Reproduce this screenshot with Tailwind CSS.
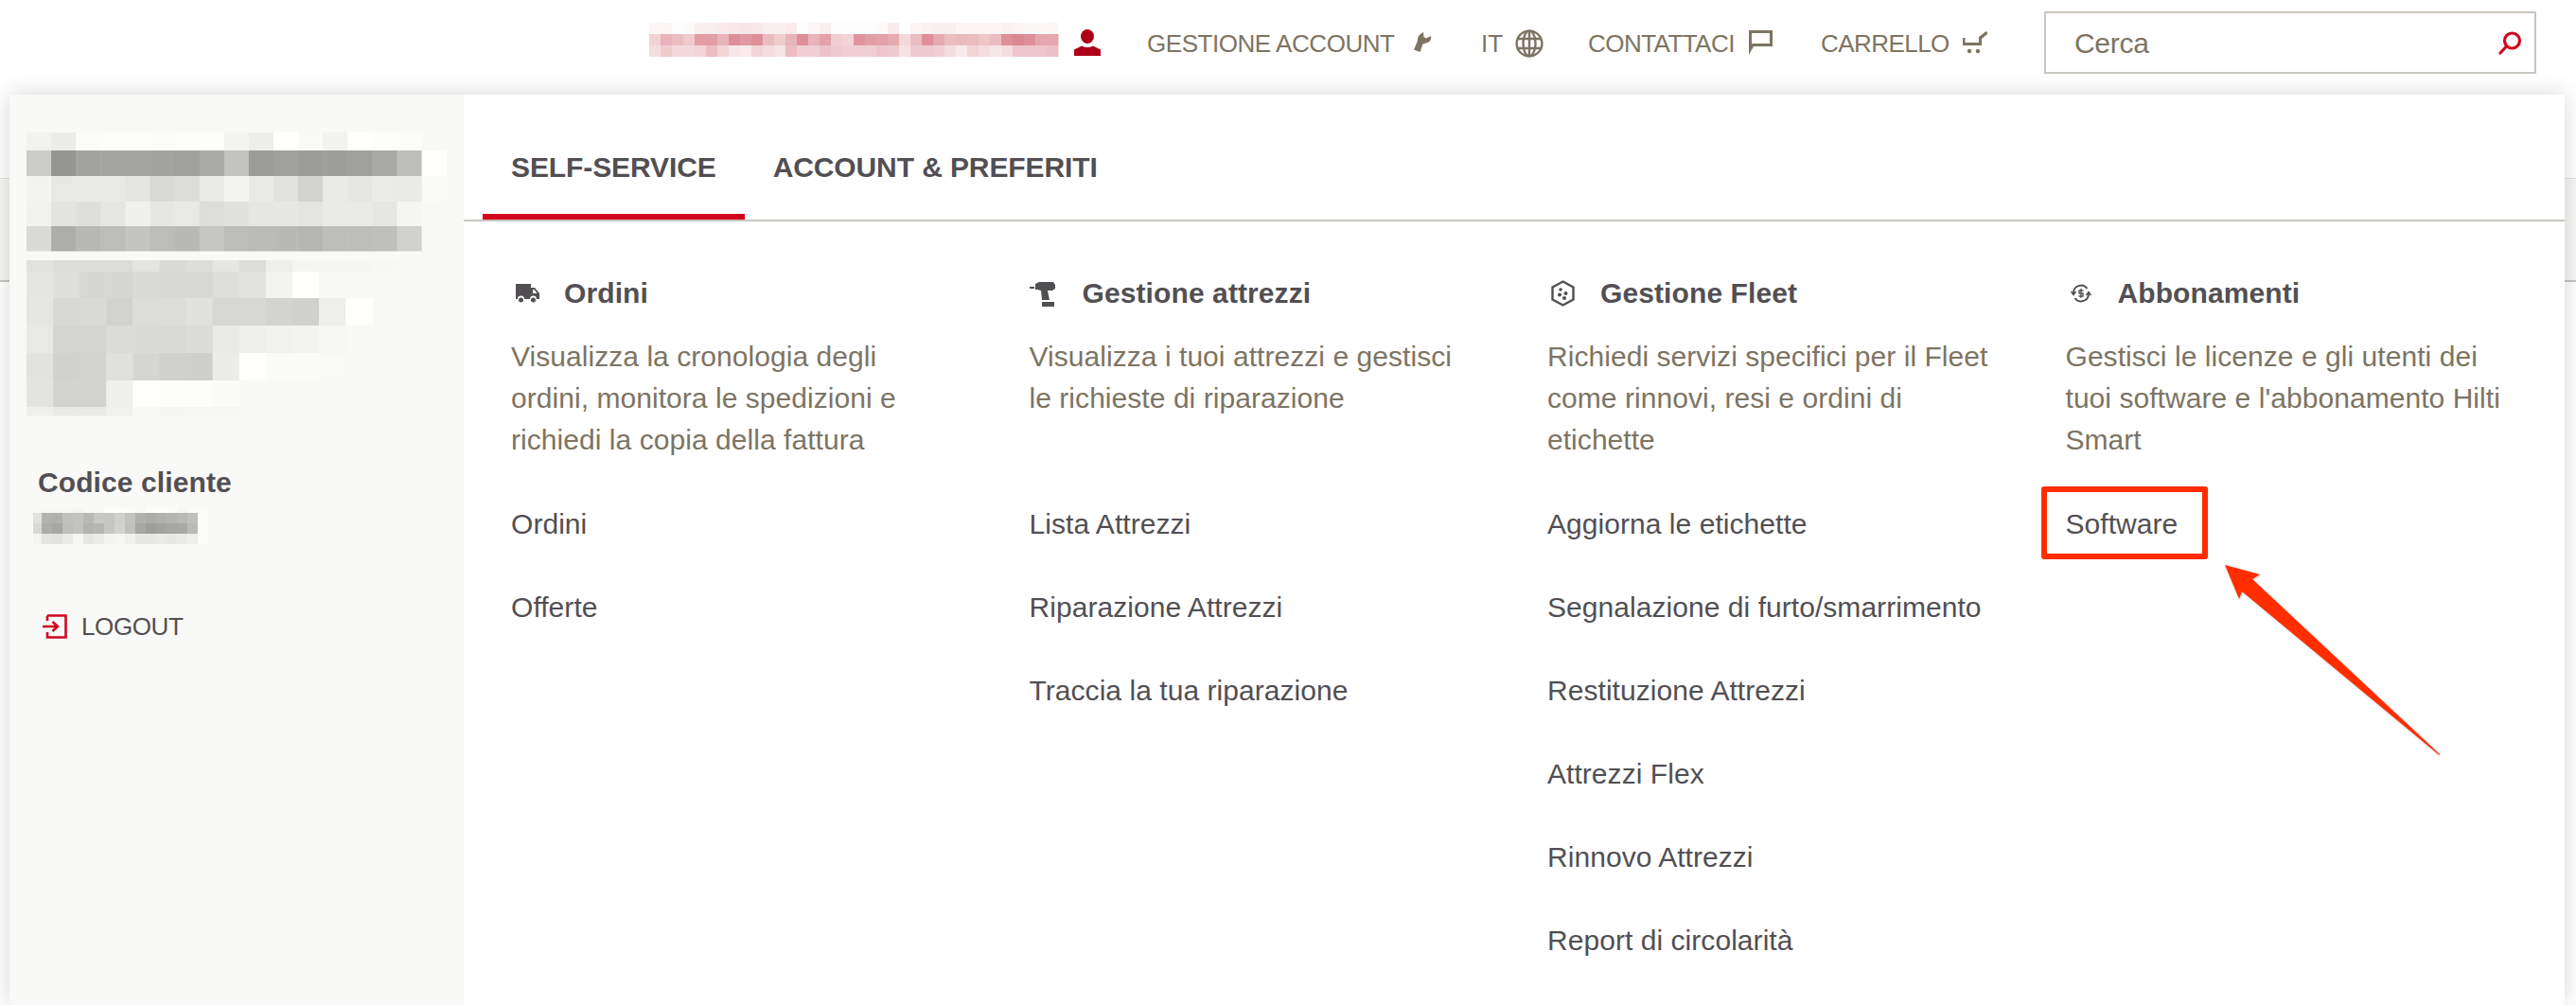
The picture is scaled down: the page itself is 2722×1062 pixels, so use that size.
<!DOCTYPE html>
<html lang="it">
<head>
    <meta charset="UTF-8">
    <title>Hilti - Self-service</title>
    <script src="https://cdn.jsdelivr.net/npm/@tailwindcss/browser@4"></script>
</head>
<body class="relative w-[2722px] h-[1062px] overflow-hidden bg-white font-['Liberation_Sans',Arial,sans-serif] text-[#524f53]">
    <!-- page behind the open menu -->
    <div class="absolute inset-x-0 top-[188px] h-[110px] bg-[#f6f6f5] border-t border-b-2 border-t-[#e2e1df] border-b-[#c9c5bf]"></div>

    <header class="relative h-[100px] flex items-start text-[#7d7463] text-[26px]">
        <svg id="user-blur" class="absolute left-[686px] top-[24px]" width="434" height="36"></svg>
        <svg class="absolute left-[1135px] top-[31px]" width="28" height="28" viewBox="0 0 28 28" fill="#ad0018"><ellipse cx="14" cy="7.5" rx="7" ry="7.5"/><path d="M0 28V21.500L8 17.500Q14 20.500 20 17.500L28 21.500V28Z"/></svg>

        <div class="absolute left-[1212px] top-[24px] h-[44px] flex items-center whitespace-nowrap tracking-[-0.45px]">GESTIONE ACCOUNT</div>
        <svg class="absolute left-[1494px] top-[34px]" width="18" height="21" viewBox="0 0 18 21" fill="#7d7463"><path d="M10 0L10.500 5L13 6.500L18 4Q18.500 9.500 14.500 11L9.500 12.500L6.500 21L0 18.500L3.800 9.500Q3.500 3 10 0Z"/></svg>

        <div class="absolute left-[1565px] top-[24px] h-[44px] flex items-center">IT</div>
        <svg class="absolute left-[1601px] top-[31px]" width="30" height="30" viewBox="0 0 30 30" fill="none" stroke="#7d7463" stroke-width="2.4"><circle cx="15" cy="15" r="13.4"/><ellipse cx="15" cy="15" rx="6.5" ry="13.4"/><path d="M15 2V28M2 10H28M2 20H28"/></svg>

        <div class="absolute left-[1678px] top-[24px] h-[44px] flex items-center whitespace-nowrap tracking-[-0.55px]">CONTATTACI</div>
        <svg class="absolute left-[1848px] top-[32px]" width="25" height="26" viewBox="0 0 25 26" fill="#7d7463"><path fill-rule="evenodd" d="M0 0H25V17H5L0 26ZM3 3V14H22V3Z"/></svg>

        <div class="absolute left-[1924px] top-[24px] h-[44px] flex items-center whitespace-nowrap tracking-[-0.55px]">CARRELLO</div>
        <svg class="absolute left-[2074px] top-[33px]" width="26" height="24" viewBox="0 0 26 24" fill="#7d7463"><path d="M0 7H2.500V12H17V6L24 0.500H26V3L20 8V15H0Z"/><circle cx="7" cy="21" r="2.200"/><circle cx="16" cy="21" r="2.200"/></svg>

        <div class="absolute left-[2160px] top-[12px] w-[520px] h-[66px] border-2 border-[#c9c5bf] flex items-center pl-[30px] text-[30px] tracking-[-0.3px]">
            Cerca
            <svg class="absolute right-[13px] top-[19px]" width="26" height="26" viewBox="0 0 26 26" fill="none" stroke="#d2051e" stroke-width="3.2"><circle cx="15.5" cy="10" r="8"/><path d="M9.500 16L3 23" stroke-linecap="round"/></svg>
        </div>
    </header>

    <div class="absolute left-[925px] top-[90px] w-0 h-0 border-x-[10px] border-x-transparent border-b-[10px] border-b-white"></div>

    <main class="relative ml-[10px] w-[2700px] h-[962px] flex bg-white shadow-[0_0_22px_rgba(0,0,0,0.16)]">
        <!-- account sidebar -->
        <aside class="relative w-[480px] shrink-0 bg-[#f9f9f7]">
            <svg id="name-blur" class="absolute left-[18px] top-[40px]" width="446" height="300"></svg>
            <div class="absolute left-[30px] top-[387px] h-[44px] flex items-center font-bold text-[30px] tracking-[0.1px] text-[#524f53]">Codice cliente</div>
            <svg id="code-blur" class="absolute left-[25px] top-[436px]" width="190" height="39"></svg>
            <div class="absolute left-[35px] top-[540px] h-[44px] flex items-center gap-[15px] text-[26px] tracking-[-0.4px]">
                <svg width="26" height="26" viewBox="0 0 26 26" fill="none" stroke="#d2051e" stroke-width="2.6"><path d="M5 1.500H24.500V24.500H5V19M5 7V1.500"/><path d="M0 13H15M10.500 8L16 13L10.500 18"/></svg>
                LOGOUT
            </div>
        </aside>

        <section class="flex-1">
            <nav class="h-[134px] pt-[55px] pl-[20px] flex items-start border-b-2 border-[#c9c5bf] font-bold text-[30px] leading-[44px] tracking-[-0.1px]">
                <a class="h-[77px] px-[30px] border-b-[6px] border-[#d2051e] whitespace-nowrap">SELF-SERVICE</a>
                <a class="h-[77px] px-[30px] whitespace-nowrap">ACCOUNT &amp; PREFERITI</a>
            </nav>

            <div class="pt-[54px] pl-[50px] grid grid-cols-[547.5px_547.5px_547.5px_1fr] text-[30px] leading-[44px] tracking-[0.05px]">
                <div>
                    <h3 class="h-[44px] flex items-center font-bold tracking-[0.1px]">
                        <svg class="ml-[5px] mr-[26px] w-[25px]" height="20" viewBox="0 0 25 20" fill="#524f53"><path fill-rule="evenodd" d="M0 0H16V4H20L25 10V16H22A3.500 3.500 0 0 0 15 16H9A3.500 3.500 0 0 0 2 16H0ZM18 6V10H22.500L19.500 6Z"/><circle cx="5.500" cy="17" r="2.500"/><circle cx="18.500" cy="17" r="2.500"/></svg>
                        Ordini
                    </h3>
                    <p class="mt-[23px] h-[132px] text-[#7d7463]">Visualizza la cronologia degli<br>ordini, monitora le spedizioni e<br>richiedi la copia della fattura</p>
                    <ul class="mt-[45px]">
                        <li class="h-[88px]">Ordini</li>
                        <li class="h-[88px]">Offerte</li>
                    </ul>
                </div>
                <div>
                    <h3 class="h-[44px] flex items-center font-bold tracking-[0.1px]">
                        <svg class="mr-[29px] w-[27px]" height="27" viewBox="0 0 27 27" fill="#524f53"><path d="M0 6H5V8H0ZM6 3L10 1H25L27 4V8L24 10H19L21 20H13L12 10L8 9H6Z"/><path d="M13 22H26V27H13Z"/></svg>
                        Gestione attrezzi
                    </h3>
                    <p class="mt-[23px] h-[132px] text-[#7d7463]">Visualizza i tuoi attrezzi e gestisci<br>le richieste di riparazione</p>
                    <ul class="mt-[45px]">
                        <li class="h-[88px]">Lista Attrezzi</li>
                        <li class="h-[88px]">Riparazione Attrezzi</li>
                        <li class="h-[88px]">Traccia la tua riparazione</li>
                    </ul>
                </div>
                <div>
                    <h3 class="h-[44px] flex items-center font-bold tracking-[0.1px]">
                        <svg class="ml-[4px] mr-[27px] w-[25px]" height="28" viewBox="0 0 25 28" fill="#524f53"><path d="M12.500 1.500L23.500 7.500V20.500L12.500 26.500L1.500 20.500V7.500Z" fill="none" stroke="#524f53" stroke-width="2.4"/><circle cx="10" cy="10" r="1.800"/><circle cx="15.500" cy="14" r="2"/><circle cx="9" cy="15.500" r="2"/><circle cx="14" cy="19" r="2"/></svg>
                        Gestione Fleet
                    </h3>
                    <p class="mt-[23px] h-[132px] text-[#7d7463]">Richiedi servizi specifici per il Fleet<br>come rinnovi, resi e ordini di<br>etichette</p>
                    <ul class="mt-[45px]">
                        <li class="h-[88px]">Aggiorna le etichette</li>
                        <li class="h-[88px]">Segnalazione di furto/smarrimento</li>
                        <li class="h-[88px]">Restituzione Attrezzi</li>
                        <li class="h-[88px]">Attrezzi Flex</li>
                        <li class="h-[88px]">Rinnovo Attrezzi</li>
                        <li class="h-[88px]">Report di circolarità</li>
                    </ul>
                </div>
                <div>
                    <h3 class="h-[44px] flex items-center font-bold tracking-[0.1px]">
                        <svg class="ml-[5px] mr-[28px] w-[22px]" height="24" viewBox="0 0 22 24" fill="none" stroke="#524f53"><path d="M3 12A8 8 0 0 1 17.500 7M19 12A8 8 0 0 1 4.500 17" stroke-width="1.800"/><path d="M0.500 10L3 13.500L5.500 10M16.500 14L19 10.500L21.500 14" stroke-width="1.500"/><path d="M13.500 9H9V12H13V15H8.500M11 7V17" stroke-width="1.300"/></svg>
                        Abbonamenti
                    </h3>
                    <p class="mt-[23px] h-[132px] text-[#7d7463]">Gestisci le licenze e gli utenti dei<br>tuoi software e l'abbonamento Hilti<br>Smart</p>
                    <ul class="mt-[45px]">
                        <li class="h-[88px]">Software</li>
                    </ul>
                </div>
            </div>
        </section>
    </main>

    <!-- annotation drawn over the screenshot -->
    <div class="absolute left-[2157px] top-[514px] w-[176px] h-[77px] border-[6px] border-[#ff2d00] rounded-[3px]"></div>
    <svg class="absolute left-[2340px] top-[590px] drop-shadow-[1px_1px_1px_rgba(0,0,0,0.25)]" width="250" height="215" viewBox="0 0 250 215" fill="#ff2d00"><path d="M11 7L48 17L40 22L238 207L237.500 208L29 35L26 43Z"/></svg>

    <script>
        // pixelated blur patches: column positions, row positions, grey levels
        function mosaic(id, xs, ys, rows, tint) {
            var svg = document.getElementById(id), out = '';
            rows.forEach(function (row, r) {
                row.forEach(function (v, c) {
                    var fill = tint ? tint(v) : 'rgb(' + v + ',' + v + ',' + (v - 1) + ')';
                    out += '<rect x="' + xs(c) + '" y="' + ys[r] + '" width="' + (xs(c + 1) - xs(c) + 0.5) + '" height="' + (ys[r + 1] - ys[r] + 0.5) + '" fill="' + fill + '"/>';
                });
            });
            svg.innerHTML = out;
        }

        var top1 = [
            [242,236,252,253,253,252,253,253,244,237,255,250,242,255,253,252],
            [204,149,162,164,164,163,160,170,194,156,160,156,158,160,168,190,254],
            [243,232,233,233,229,217,220,233,244,233,226,211,234,230,235,234,250],
            [242,227,223,230,240,230,232,221,225,230,231,228,234,234,230,245,248],
            [218,173,184,188,196,188,185,198,188,187,185,181,189,189,191,209,248]
        ];
        var top2 = [
            [226,220,220,220,228,217,221,229,220,238,245,245,245,247],
            [229,223,214,214,218,216,215,221,226,243,254,249,249],
            [230,216,217,210,220,220,225,215,215,211,208,238,254],
            [232,212,212,219,218,217,219,234,239,241,243,247,249],
            [226,209,211,224,214,208,207,236,254,251,251,250,249],
            [227,211,211,240,254,253,253,251,249],
            [239,233,233,240,248,245,246,246]
        ];
        var svg = document.getElementById('name-blur'), html = '';
        // upper patch, then lower patch, both relative to the svg
        mosaic('name-blur', function (c) { return c * 26.1; }, [0, 19, 46, 73, 99, 125], top1);
        html = svg.innerHTML;
        mosaic('name-blur', function (c) { return c * 28.1; }, [135, 147, 175, 204, 233, 262, 290, 299], top2);
        svg.innerHTML = html + svg.innerHTML;

        mosaic('code-blur', function (c) { return c ? 9 + (c - 1) * 11 : 0; }, [0, 6, 17, 28, 39], [
            [249,247,246,247,245,248,249,253,253,252,249,253,253,252,247,250,252],
            [225,178,176,192,194,184,200,198,208,194,176,172,176,180,184,192,252],
            [216,172,166,190,194,178,182,198,210,192,166,158,162,166,168,186,252],
            [244,228,226,234,246,230,236,244,246,240,232,232,234,232,234,238,252]
        ]);
        // pink patch in the header: light rows over white
        mosaic('user-blur', function (c) { return c * 12; }, [0, 12, 24, 36], [
            [251,250,254,253,248,247,246,245,244,245,248,248,246,254,251,248,254,254,254,254,253,246,254,250,249,248,248,250,250,250,250,249,250,252,252,251],
            [235,222,226,232,212,212,222,206,210,206,226,232,222,206,222,214,234,236,208,212,214,218,238,226,206,218,226,224,226,230,226,206,202,206,216,216],
            [240,232,238,238,236,226,236,244,246,236,240,242,226,234,234,228,232,234,234,234,230,232,242,232,232,234,240,246,236,240,244,240,230,230,230,228]
        ], function (v) {
            var k = (255 - v) / 53, g = Math.round(255 - 120 * k);
            return 'rgb(' + Math.round(255 - 37 * k) + ',' + g + ',' + Math.round(g + 8 * k) + ')';
        });
    </script>
</body>
</html>
